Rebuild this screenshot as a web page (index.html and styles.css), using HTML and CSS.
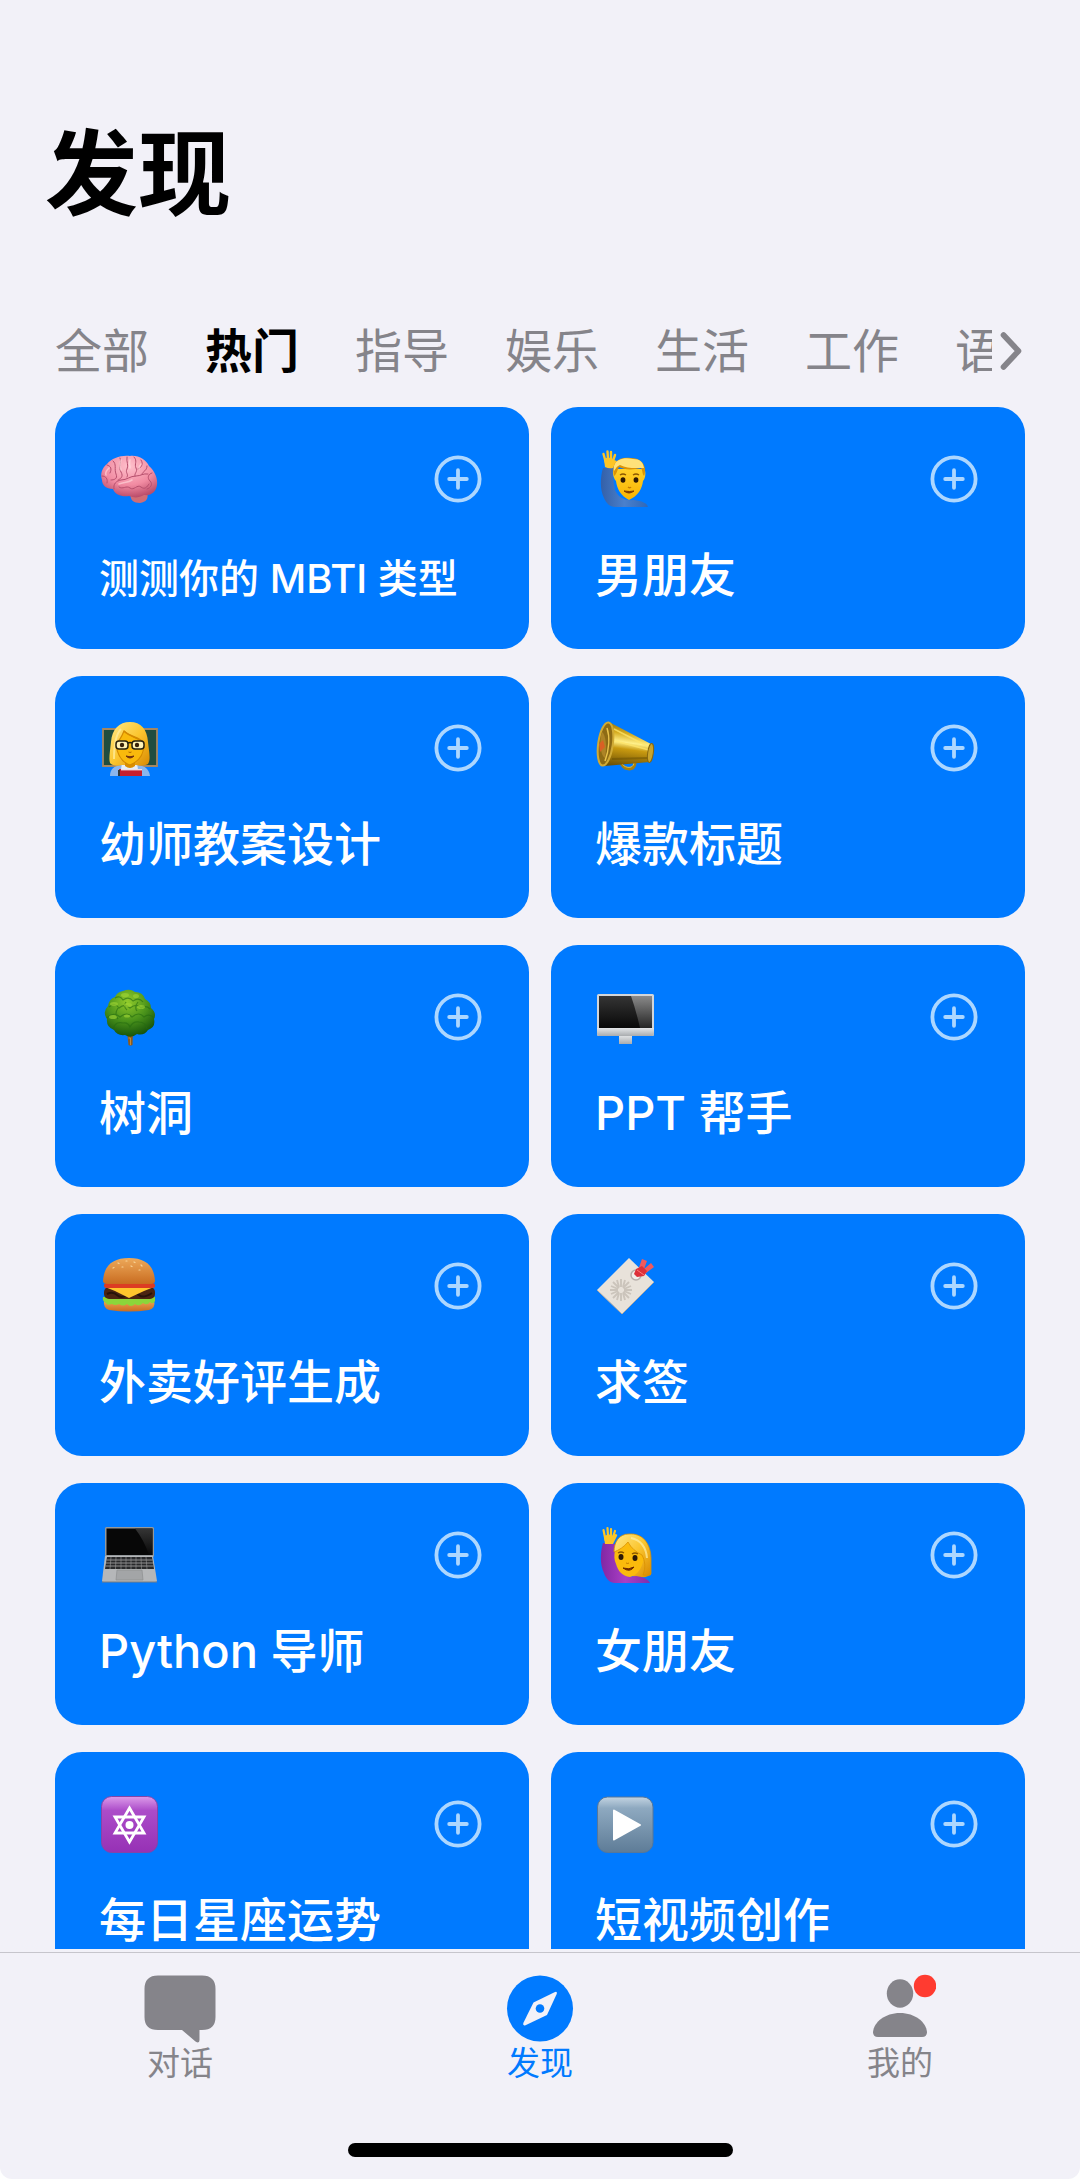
FILE: index.html
```html
<!DOCTYPE html>
<html lang="zh-CN">
<head>
<meta charset="utf-8">
<meta name="viewport" content="width=device-width, initial-scale=1">
<title>发现</title>
<link rel="stylesheet" href="styles.css">
</head>
<body>
<svg class="defs" aria-hidden="true">
  <defs>
    <linearGradient id="skin" x1="0" y1="0" x2="0" y2="1"><stop offset="0" stop-color="#ffd02a"/><stop offset="1" stop-color="#f9b400"/></linearGradient>
    <linearGradient id="hair" x1="0" y1="0" x2="1" y2="1"><stop offset="0" stop-color="#ffe98a"/><stop offset=".5" stop-color="#fbc630"/><stop offset="1" stop-color="#d98a00"/></linearGradient>
    <linearGradient id="blue-sleeve" x1="0" y1="0" x2="1" y2="0"><stop offset="0" stop-color="#3460a8"/><stop offset=".5" stop-color="#4a80cc"/><stop offset="1" stop-color="#2f68b8"/></linearGradient>
    <linearGradient id="purple-sleeve" x1="0" y1="0" x2="1" y2="0"><stop offset="0" stop-color="#8127a3"/><stop offset=".5" stop-color="#aa3fc5"/><stop offset="1" stop-color="#7d2fae"/></linearGradient>
    <radialGradient id="brain" cx=".5" cy=".25" r=".75"><stop offset="0" stop-color="#ffc1cc"/><stop offset=".6" stop-color="#f18ba2"/><stop offset="1" stop-color="#bb4d6a"/></radialGradient>
    <linearGradient id="gold" x1="0.4" y1="0" x2=".25" y2="1"><stop offset="0" stop-color="#8a6a08"/><stop offset=".25" stop-color="#d6ac20"/><stop offset=".45" stop-color="#fff08a"/><stop offset=".6" stop-color="#c99a10"/><stop offset="1" stop-color="#6c5005"/></linearGradient>
    <radialGradient id="leaf" cx=".45" cy=".25" r=".75"><stop offset="0" stop-color="#91cb2b"/><stop offset=".55" stop-color="#4a931b"/><stop offset="1" stop-color="#17540c"/></radialGradient>
    <linearGradient id="screen" x1="0" y1="0" x2="0" y2="1"><stop offset="0" stop-color="#353535"/><stop offset="1" stop-color="#080808"/></linearGradient>
    <linearGradient id="glare" x1="0" y1="0" x2="0" y2="1"><stop offset="0" stop-color="#8a8a8a"/><stop offset="1" stop-color="#252525"/></linearGradient>
    <linearGradient id="metal" x1="0" y1="0" x2="0" y2="1"><stop offset="0" stop-color="#e4e6e8"/><stop offset="1" stop-color="#a9acaf"/></linearGradient>
    <linearGradient id="bun" x1="0" y1="0" x2="0" y2="1"><stop offset="0" stop-color="#eda95a"/><stop offset="1" stop-color="#c96c20"/></linearGradient>
    <linearGradient id="violet" x1="0" y1="0" x2="0" y2="1"><stop offset="0" stop-color="#dc9bea"/><stop offset=".25" stop-color="#ac4cc9"/><stop offset="1" stop-color="#9631b5"/></linearGradient>
    <linearGradient id="slate" x1="0" y1="0" x2="0" y2="1"><stop offset="0" stop-color="#c3d4e2"/><stop offset=".2" stop-color="#8ea9c0"/><stop offset="1" stop-color="#5e7c97"/></linearGradient>
    <symbol id="plus" viewBox="0 0 48 48"><g fill="none" stroke="#add7ff" stroke-width="3.8" stroke-linecap="round"><circle cx="24" cy="24" r="21.6"/><path d="M24 15.2v17.6M15.2 24h17.6"/></g></symbol>
  </defs>
</svg>
<div class="app">
  <header class="header">
    <h1 class="title">发现</h1>
    <div class="categories">
      <nav class="category-list" aria-label="分类">
        <button class="category" type="button">全部</button>
        <button class="category is-active" type="button" aria-current="true">热门</button>
        <button class="category" type="button">指导</button>
        <button class="category" type="button">娱乐</button>
        <button class="category" type="button">生活</button>
        <button class="category" type="button">工作</button>
        <button class="category" type="button">语言</button>
      </nav>
      <button class="more" type="button" aria-label="更多分类"><svg viewBox="0 0 22 40" width="22" height="40"><path d="M3.500 4 18.500 20 3.500 36" fill="none" stroke="#85848a" stroke-width="5.600" stroke-linecap="round" stroke-linejoin="round"/></svg></button>
    </div>
  </header>

  <main class="cards">
    <article class="card">
      <div class="card-top">
        <svg class="emoji" viewBox="0 0 60 60" aria-hidden="true">
          <path d="M32 44c-2 7 3 10 9 10 6-1 9-4 7-11z" fill="#cf6d76"/>
          <path d="M3 31C1 25 3 19 8 15 13 9 22 6 31 7c9-1 16 4 19 10 6 5 9 13 8 19-1 7-6 11-13 10-5 3-10 3-15 1-7 1-14-1-16-7C7 40 3 36 3 31z" fill="url(#brain)"/>
          <g fill="none" stroke="#b64f6d" stroke-width="1" stroke-linecap="round"><path d="M15 40c-1-5 2-8 7-9 6 0 9-4 15-4 5 0 7-3 12-2M8 16c4 1 5 4 3 8M14 12c4 3 1 8 3 13s-2 6-5 6M21 9c2 5-2 9 1 14s-1 7-3 8M28 8c-1 5 2 8 0 12s2 5 0 8M35 8c4 4 0 7 2 11s-2 5-1 8M42 11c3 4 0 8-3 9M48 17c0 5-4 5-5 8M53 24c-4 1-5 5-2 8s1 7-3 8M20 38c4 3 7-2 11 1s7-4 11-1 6 0 8-3M3 27c4 0 6 3 5 7"/></g>
          <path d="M22 11c-1 4-2 6 0 10M31 11c-1 4 0 5 0 8M10 19c-3 3-4 5-3 7M42 15c-2 2-2 3-2 5M20 35c5-2 9-1 13-4" fill="none" stroke="#ffdce0" stroke-width="1.600" stroke-linecap="round" opacity=".6"/>
        </svg>
        <button class="add" type="button" aria-label="添加测测你的 MBTI 类型"><svg><use href="#plus"/></svg></button>
      </div>
      <h2 class="card-title is-long">测测你的 MBTI 类型</h2>
    </article>

    <article class="card">
      <div class="card-top">
        <svg class="emoji" viewBox="0 0 60 60" aria-hidden="true">
          <path d="M8 19c-3 10-3 22 1 30 2 5 6 9 11 9h33c-1-4-6-6-14-7-10 1-16-3-19-10-2-7-2-15-1-22z" fill="url(#blue-sleeve)"/>
          <path d="M10 18 9 10q6-3 10 1l3 1-4 7q-4 1-8-1z" fill="#fdc526"/>
          <path d="M11 14 8.500 5M13 10 12.500 2.500M16 10V3M18 12l2-6" fill="none" stroke="#fdc526" stroke-width="2.400" stroke-linecap="round"/>
          <path d="M19 20h30c2 1 2 9-1 12-1 8-5 15-14 19-8-4-12-11-13-19-3-3-4-11-2-12z" fill="url(#skin)"/>
          <path d="M19 27c-1-6-1-11 2-14 3-4 9-5 15-4 8 0 13 4 14 11 0 3 0 5-1 7-2-2-1-5-3-8-8 2-17 2-22-1-2 3-2 7-5 9z" fill="#dc9406"/>
          <path d="M19 22c-1-5 1-9 5-11 4-2 9-2 14-1 7 0 10 3 11 9-8 0-17 1-24-3-3 1-4 3-6 6z" fill="#ffe27a"/>
          <ellipse cx="28" cy="31" rx="2.400" ry="2.700" fill="#2d1906"/><ellipse cx="41" cy="31" rx="2.400" ry="2.700" fill="#2d1906"/>
          <path d="M25 26q3-2 6 0M38 26q3-2 6 0" fill="none" stroke="#8c5900" stroke-width="1.300"/>
          <path d="M33 38q2 1.500 3 0" fill="none" stroke="#c47b00" stroke-width="1.300"/><path d="M29 42q5 4 10 0-4 1-10 0z" fill="#7c3a00" stroke="#7c3a00"/>
        </svg>
        <button class="add" type="button" aria-label="添加男朋友"><svg><use href="#plus"/></svg></button>
      </div>
      <h2 class="card-title">男朋友</h2>
    </article>

    <article class="card">
      <div class="card-top">
        <svg class="emoji" viewBox="0 0 60 60" aria-hidden="true">
          <path d="M4 11h54v37H4z" fill="#204d3f" stroke="#a58762" stroke-width="1.800"/>
          <path d="M11 58c0-7 4-10 11-11h17c7 1 11 4 12 11z" fill="#8ab6ed"/>
          <path d="M23 45h15l2 13H21z" fill="#e7edf5"/>
          <path d="M12 46c-3-2-1-12 0-22C13 11 20 4 31 4s17 7 18 20c1 10 3 17 0 22-4 2-8 2-12 1H23c-4 1-8 1-11-1z" fill="url(#hair)"/>
          <path d="M26 42h10v6q-5 4-10 0z" fill="#d98d00"/>
          <path d="M17 26c3-3 6-8 8-13 7 7 17 7 20 13 0 9-4 17-14 21-9-3-13-12-14-21z" fill="#f9b90c" stroke="#d48a00" stroke-width="1.200"/>
          <path d="M22 11c-5 5-7 18-7 30" fill="none" stroke="#fff0a5" stroke-width="2" opacity=".7"/>
          <path d="M25 13c6 6 15 6 19 11" fill="none" stroke="#d48a00" stroke-width="1.500"/>
          <g fill="#fff2b4" stroke="#25210f" stroke-width="1.500"><rect x="17" y="23" width="12" height="8" rx="3"/><rect x="33" y="23" width="12" height="8" rx="3"/></g><path d="M29 25q2-1 4 0" stroke="#25210f" stroke-width="1.500" fill="none"/>
          <circle cx="23" cy="27" r="2.200" fill="#36210a"/><circle cx="38" cy="27" r="2.200" fill="#36210a"/>
          <path d="M27 38q4 1.500 8 0-4 4-8 0z" fill="#713010" stroke="#713010"/><path d="M29.500 34q1.500 1 3 0" stroke="#b46b00" fill="none"/>
          <path d="M20 51h23v7H20z" fill="#c61f2e"/><path d="M22 51h21v1.400H22z" fill="#f1dfe0"/><path d="M19 52h2v6h-2z" fill="#34393f"/>
        </svg>
        <button class="add" type="button" aria-label="添加幼师教案设计"><svg><use href="#plus"/></svg></button>
      </div>
      <h2 class="card-title">幼师教案设计</h2>
    </article>

    <article class="card">
      <div class="card-top">
        <svg class="emoji" viewBox="0 0 60 60" aria-hidden="true">
          <path d="M26 44c1 8 14 10 14 1" fill="none" stroke="#a77f0e" stroke-width="3"/><path d="M26 44c2 6 12 8 13 1" fill="none" stroke="#e4c03b"/>
          <path d="M14 4 56 26c3 4 3 14-1 18L10 48z" fill="url(#gold)"/>
          <path d="M19 11 54 29M17 22l37 10" stroke="#ffe66c" stroke-width="1.600" opacity=".75"/><path d="M17 41l36-1" stroke="#695006" stroke-width="2" opacity=".5"/>
          <ellipse cx="55.500" cy="35" rx="2.800" ry="9.500" transform="rotate(8 55.500 35)" fill="#c9a42c" stroke="#876710"/>
          <ellipse cx="10.500" cy="26" rx="7.300" ry="21.800" transform="rotate(8 10.500 26)" fill="#8d6b15" stroke="#d0aa35" stroke-width="2"/>
          <path d="M7 14c4 3 5 15 3 26-5-3-6-17-3-26z" fill="#ad8426"/><path d="M4 26l4-4 2 7-5 5z" fill="#d96024"/><path d="M12 10c3 9 2 22-2 33" fill="none" stroke="#e9c34c" stroke-width="1.500"/>
        </svg>
        <button class="add" type="button" aria-label="添加爆款标题"><svg><use href="#plus"/></svg></button>
      </div>
      <h2 class="card-title">爆款标题</h2>
    </article>

    <article class="card">
      <div class="card-top">
        <svg class="emoji" viewBox="0 0 60 60" aria-hidden="true">
          <path d="M28 44h6l-.5 14q-2.500 1-4 0z" fill="#8e5b1e"/><path d="M29.500 51h2v7" stroke="#c08a3b" fill="none"/>
          <path d="M24 4q7-3 12 1 8 0 10 7 6 3 6 9 6 5 3 11 2 8-6 11-4 6-11 4-6 5-12 1-8 1-11-5-8-3-7-11-5-7 1-13 1-7 7-9 2-5 8-6z" fill="url(#leaf)"/>
          <g fill="none" stroke="#256c10" stroke-width="1.200" opacity=".6"><path d="M16 11q5-3 8 2 6-4 10 1 6-4 10 1M10 20q6-5 10 1 6-5 11 0 7-5 11 0 5-3 9 1M8 31q7-7 13-1 7-6 12 0 7-6 12 0 5-4 10 1M14 42q2-8 10-6 5-1 7 4 3-6 9-5 7 0 8 7M27 15q-3 5 1 8M39 15q-4 5-1 9M19 21q-4 6 0 11"/></g>
          <g fill="#a1d635" opacity=".6"><ellipse cx="26" cy="8" rx="4" ry="2"/><ellipse cx="37" cy="9" rx="3" ry="2"/><ellipse cx="15" cy="17" rx="4" ry="2"/><ellipse cx="29" cy="18" rx="4" ry="2"/><ellipse cx="42" cy="20" rx="4" ry="2"/><ellipse cx="14" cy="30" rx="4" ry="2"/><ellipse cx="28" cy="29" rx="3" ry="1.500"/></g>
        </svg>
        <button class="add" type="button" aria-label="添加树洞"><svg><use href="#plus"/></svg></button>
      </div>
      <h2 class="card-title">树洞</h2>
    </article>

    <article class="card">
      <div class="card-top">
        <svg class="emoji" viewBox="0 0 60 60" aria-hidden="true">
          <path d="M24 48h13v9H24z" fill="url(#metal)"/><rect x="2" y="7" width="57" height="42" rx="1.500" fill="#d3d6d9"/><path d="M4 9h53v32H4z" fill="url(#screen)"/><path d="M36 9h21v32H45q-4-18-9-32z" fill="url(#glare)"/><path d="M2 41h57v6q0 2-2 2H4q-2 0-2-2z" fill="url(#metal)"/>
        </svg>
        <button class="add" type="button" aria-label="添加 PPT 帮手"><svg><use href="#plus"/></svg></button>
      </div>
      <h2 class="card-title">PPT 帮手</h2>
    </article>

    <article class="card">
      <div class="card-top">
        <svg class="emoji" viewBox="0 0 60 60" aria-hidden="true">
          <path d="M5 44h50q2 8-5 10-20 3-40 0-6-2-5-10z" fill="url(#bun)"/>
          <path d="M4 41h52v4q-2 4-5 1-3 4-7 1-4 4-8 1-4 4-8 0-4 3-8 0-4 2-7 0-5 2-6-1-4-2-3-6z" fill="#8bd63a"/>
          <rect x="5" y="31" width="51" height="12" rx="5" fill="#4b2412"/><path d="M8 38q6-3 10 1t11 0 11 0 13-2" stroke="#27120a" stroke-width="2" fill="none"/>
          <path d="M6 31h49l-10 4-15 7-14-7z" fill="#ffc52d"/>
          <rect x="5" y="27" width="51" height="5" rx="2.500" fill="#dc3c23"/>
          <path d="M4 25C5 9 14 2 30 2s25 7 26 23q0 3-5 3H9q-5 0-5-3z" fill="url(#bun)"/>
          <g stroke="#ffe4ac" stroke-width="1.200" stroke-linecap="round" opacity=".8"><path d="M19 7l1 .5M27 5h1M35 6l1 .5M42 9l1 1M14 12l1-.5M23 11h1M32 10l1 .5M40 14h1"/></g>
        </svg>
        <button class="add" type="button" aria-label="添加外卖好评生成"><svg><use href="#plus"/></svg></button>
      </div>
      <h2 class="card-title">外卖好评生成</h2>
    </article>

    <article class="card">
      <div class="card-top">
        <svg class="emoji" viewBox="0 0 60 60" aria-hidden="true">
          <path d="M34 2 59 26 27 58 2 34z" fill="#e8e2da"/><path d="M2 34 27 58 59 26" fill="none" stroke="#b8b0a7"/>
          <g stroke="#cbc4bb" stroke-width="1.900"><path d="M26 23v8M26 37v8M15 34h8M29 34h8M18 26l6 6M28 36l6 6M18 42l6-6M28 32l6-6M22 24l2 7M28 37l2 7M30 24l-2 7M24 37l-2 7M16 30l7 3M29 35l7 3M16 38l7-3M29 33l7-3"/></g>
          <circle cx="41" cy="19" r="5" fill="#f1eeeb" stroke="#b8afab" stroke-width="1.500"/>
          <path d="M42 17 47 3l5 2-3 8 7-6 3 4-12 9z" fill="#f05a5e"/><path d="m41 13 6-3 5 5-3 5-7 1-3-3z" fill="#dd303a"/><path d="m42 14 7 5" stroke="#ff7a79"/>
        </svg>
        <button class="add" type="button" aria-label="添加求签"><svg><use href="#plus"/></svg></button>
      </div>
      <h2 class="card-title">求签</h2>
    </article>

    <article class="card">
      <div class="card-top">
        <svg class="emoji" viewBox="0 0 60 60" aria-hidden="true">
          <rect x="6" y="2" width="49" height="30" rx="1.500" fill="#94999c"/><path d="M7.500 3.500h46V30h-46z" fill="#070707"/><path d="M36 3.500h17.500V30H50Q45 15 36 3.500z" fill="url(#screen)"/>
          <path d="M6 31h48l4 25q0 1-2 1H5q-2 0-2-1z" fill="#b5b7b9"/><path d="M8 32h45l2 12H6z" fill="#28292b"/>
          <path d="M7.500 35h46M7 38h47M6.500 41h48" stroke="#aaa" stroke-width=".8"/><path d="M12 32l-1 12M17 32l-.5 12M22 32v12M27 32v12M32 32v12M37 32v12M42 32l.5 12M47 32l1 12" stroke="#999" stroke-width=".6"/>
          <path d="M18 45h25l1 10H17z" fill="#a3a5a7" stroke="#8d8f91" stroke-width=".7"/><path d="M3 57h55" stroke="#7b7d7f"/>
        </svg>
        <button class="add" type="button" aria-label="添加 Python 导师"><svg><use href="#plus"/></svg></button>
      </div>
      <h2 class="card-title">Python 导师</h2>
    </article>

    <article class="card">
      <div class="card-top">
        <svg class="emoji" viewBox="0 0 60 60" aria-hidden="true">
          <path d="M22 31c0-12 2-21 13-22 13 0 20 9 20 23l1 18q-11 5-21 0z" fill="url(#hair)"/>
          <path d="M8 18c-3 10-3 22 1 30 2 6 6 10 11 10h35c-1-3-6-6-14-7-10 2-16-3-19-10-2-7-2-15-1-22z" fill="url(#purple-sleeve)"/>
          <path d="M10 19 9 11q6-3 9 0l2-2q3 0 2 2l-4 8z" fill="#fdc526"/><path d="M10.500 15 8.500 5M13 11 12.500 3M16 11V4M18 12l2-6" fill="none" stroke="#fdc526" stroke-width="2.200" stroke-linecap="round"/>
          <path d="M20 26c2-9 8-13 15-13 9 2 15 9 14 20-2 10-6 17-14 19-8-1-12-6-14-13-2-4-2-9-1-13z" fill="#fbbb0c"/>
          <path d="M19 27c0-10 5-18 15-18 13-1 22 9 22 25v15q-5 2-8 1c3-8 2-14-1-20-6-3-11-7-14-13-4 5-9 8-14 10z" fill="url(#hair)" stroke="#d99000" stroke-width=".8"/>
          <path d="M36 13c9 2 15 9 16 20" fill="none" stroke="#fff0a5" stroke-width="2" opacity=".7"/>
          <ellipse cx="26" cy="32" rx="2.500" ry="3" fill="#2d1906"/><ellipse cx="40" cy="33" rx="2.500" ry="3" fill="#2d1906"/>
          <path d="M23 28q3-2 6 0M37 29q3-2 6 0" fill="none" stroke="#8c5900" stroke-width="1.300"/><path d="M28 43q6 2 11-1-4 6-11 1z" fill="#6d2800" stroke="#6d2800"/><path d="M31 38q2 1 3 0" stroke="#c47b00" fill="none"/>
        </svg>
        <button class="add" type="button" aria-label="添加女朋友"><svg><use href="#plus"/></svg></button>
      </div>
      <h2 class="card-title">女朋友</h2>
    </article>

    <article class="card">
      <div class="card-top">
        <svg class="emoji" viewBox="0 0 60 60" aria-hidden="true">
          <rect x="2.500" y="2.500" width="56" height="56" rx="10" fill="url(#violet)" stroke="#8444a8"/>
          <g fill="none" stroke="#fff" stroke-width="2.800"><path d="M30.500 14 45 39H16z"/><path d="M30.500 48 16 23h29z"/></g><circle cx="30.500" cy="31" r="4" fill="#fff"/>
        </svg>
        <button class="add" type="button" aria-label="添加每日星座运势"><svg><use href="#plus"/></svg></button>
      </div>
      <h2 class="card-title">每日星座运势</h2>
    </article>

    <article class="card">
      <div class="card-top">
        <svg class="emoji" viewBox="0 0 60 60" aria-hidden="true">
          <rect x="2.500" y="3" width="55.500" height="55.500" rx="10" fill="url(#slate)" stroke="#56779a"/><path d="M19 16.500 45 31 19 45.500z" fill="#fff" stroke="#fff" stroke-width="2" stroke-linejoin="round"/>
        </svg>
        <button class="add" type="button" aria-label="添加短视频创作"><svg><use href="#plus"/></svg></button>
      </div>
      <h2 class="card-title">短视频创作</h2>
    </article>
  </main>

  <footer class="footer">
    <nav class="tabs" aria-label="主导航">
      <a class="tab" href="#chat">
        <svg class="tab-icon" viewBox="0 0 72 70" aria-hidden="true"><path d="M14 2.500h44q13.500 0 13.500 13.500v28q0 13-13.500 13h-2.500v10q0 4-4 1.500L38 57H14Q.5 57 .5 44V16Q.5 2.500 14 2.500z" fill="currentColor"/></svg>
        <span>对话</span>
      </a>
      <a class="tab is-active" href="#discover" aria-current="page">
        <svg class="tab-icon" viewBox="0 0 72 70" aria-hidden="true"><circle cx="36" cy="35.500" r="33" fill="currentColor"/><path d="M29.500 29.500 50.500 19.200q3-1.200 2.300 1.600L43 42 21.500 52.300q-3 .8-2.200-2.200z" fill="#f2f1f8"/><circle cx="36" cy="35.500" r="4.300" fill="currentColor"/></svg>
        <span>发现</span>
      </a>
      <a class="tab" href="#me">
        <svg class="tab-icon" viewBox="0 0 72 70" aria-hidden="true"><ellipse cx="36" cy="20.500" rx="13.200" ry="14.200" fill="currentColor"/><path d="M14 64q-5 0-5-5c1-10 12-19 27-19s26 9 27 19q0 5-5 5z" fill="currentColor"/><circle cx="61" cy="13" r="11.200" fill="#ff3b30"/></svg>
        <span>我的</span>
      </a>
    </nav>
    <div class="home-indicator"></div>
  </footer>
</div>
</body>
</html>
```
FILE: styles.css
```css
* {
  box-sizing: border-box;
}

html {
  background: #fff;
}

body {
  margin: 0;
  font-family: Inter, "Noto Sans CJK SC", sans-serif;
  color: #000;
}

button {
  padding: 0;
  border: 0;
  background: none;
  color: inherit;
  font: inherit;
  cursor: pointer;
}

svg {
  display: block;
}

.defs {
  position: absolute;
  width: 0;
  height: 0;
}

.app {
  display: flex;
  flex-direction: column;
  height: 100vh;
  overflow: hidden;
  background: #f2f1f8;
  border-radius: 0 0 12px 12px;
}

.header {
  flex: none;
  padding: 124px 55px 26px;
}

.title {
  margin: 0 0 97px -10px;
  font-size: 93px;
  font-weight: 600;
  line-height: 100px;
}

.categories {
  display: flex;
  align-items: center;
  gap: 8px;
  padding-right: 3px;
}

.category-list {
  display: flex;
  flex: 1;
  min-width: 0;
  gap: 56px;
  overflow: hidden;
}

.category {
  flex: none;
  color: #85848a;
  font-size: 47px;
  line-height: 60px;
}

.category.is-active {
  color: #000;
  font-weight: 600;
}

.more {
  flex: none;
}

.cards {
  display: grid;
  flex: 1;
  grid-template-columns: 1fr 1fr;
  grid-auto-rows: max-content;
  gap: 27px 22px;
  min-height: 0;
  margin: 0 55px 3px;
  overflow-y: auto;
  scrollbar-width: none;
}

.card {
  display: flex;
  flex-direction: column;
  gap: 36px;
  padding: 42px 47px 44px 44px;
  border-radius: 27px;
  background: #007aff;
  color: #fff;
}

.card-top {
  display: flex;
  align-items: center;
  justify-content: space-between;
}

.emoji {
  width: 60px;
  height: 60px;
}

.add svg {
  width: 48px;
  height: 48px;
}

.card-title {
  margin: 0;
  font-size: 47px;
  font-weight: 500;
  line-height: 60px;
  white-space: nowrap;
}

.card-title.is-long {
  padding-top: 8px;
  font-size: 40px;
  line-height: 52px;
}

.footer {
  display: flex;
  flex: none;
  flex-direction: column;
  gap: 62px;
  padding: 20px 0 22px;
  border-top: 1px solid #c6c5cc;
}

.tabs {
  display: grid;
  grid-template-columns: repeat(3, 1fr);
}

.tab {
  display: flex;
  flex-direction: column;
  align-items: center;
  gap: 2px;
  color: #85848a;
  font-size: 33px;
  line-height: 36px;
  text-decoration: none;
}

.tab.is-active {
  color: #007aff;
}

.tab-icon {
  width: 72px;
  height: 70px;
}

.home-indicator {
  align-self: center;
  width: 36%;
  max-width: 385px;
  height: 14px;
  border-radius: 7px;
  background: #000;
}
```
